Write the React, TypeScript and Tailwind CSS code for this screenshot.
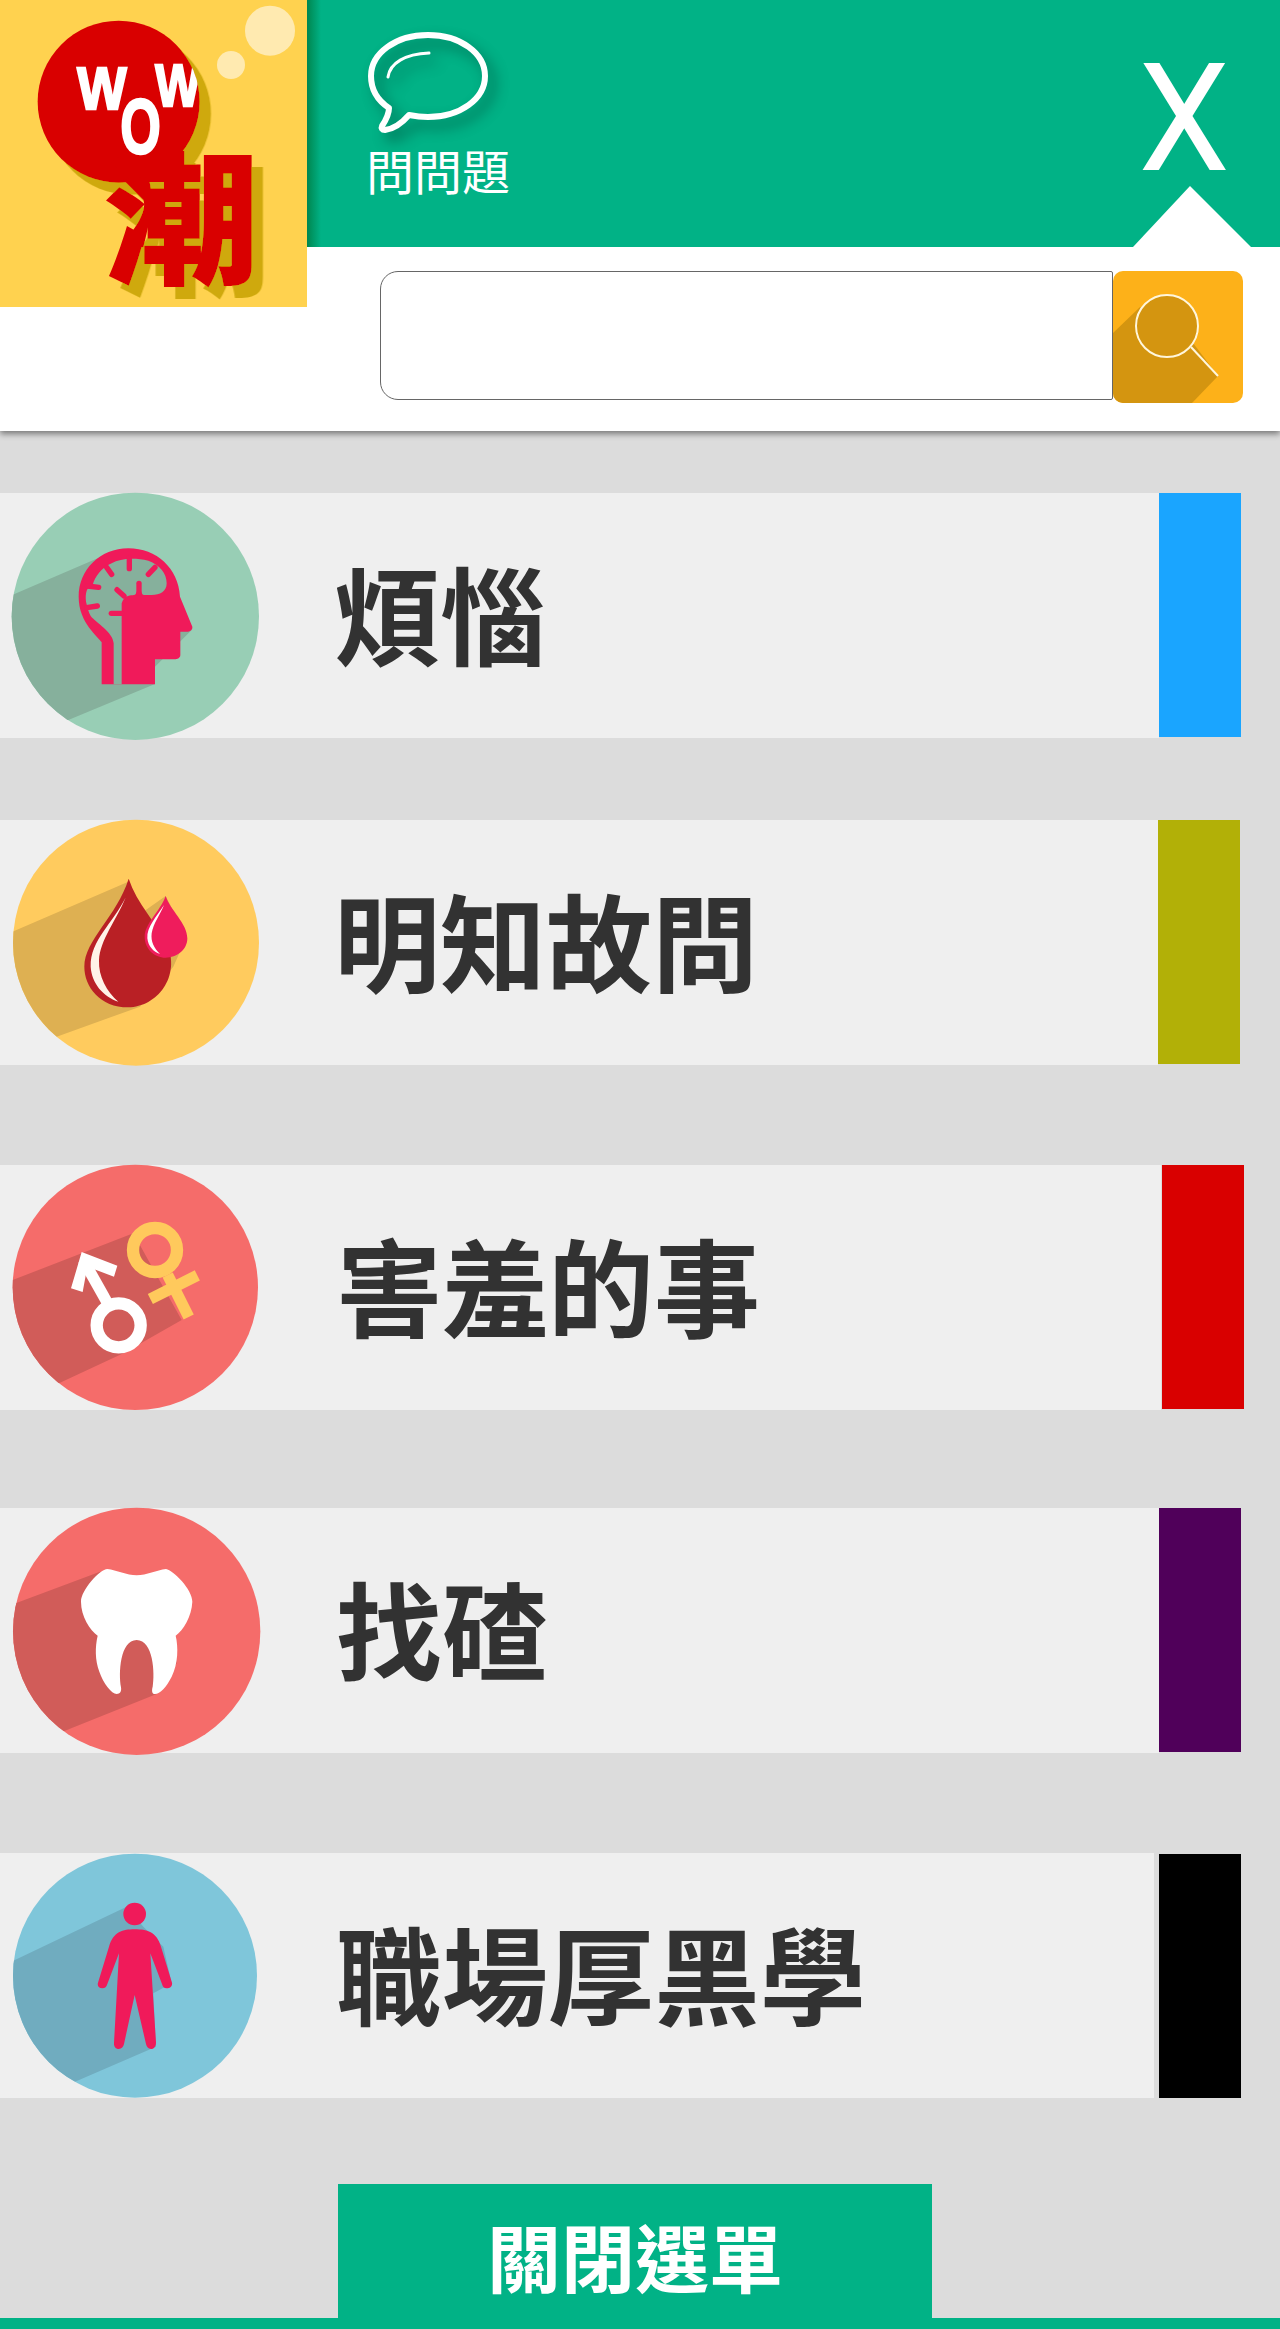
import React from "react";

const cjk = "'Noto Sans CJK TC','Noto Sans CJK SC',sans-serif";

function Logo() {
  return (
    <svg viewBox="0 0 921 921" width="307" height="307" className="absolute left-0 top-0">
      <defs>
        <clipPath id="ball"><circle cx="356" cy="305" r="243" /></clipPath>
        <filter id="cast" filterUnits="userSpaceOnUse" x="0" y="0" width="921" height="921">
          <feDropShadow dx="34" dy="36" stdDeviation="0" floodColor="#cfa90f" floodOpacity="1" />
        </filter>
      </defs>
      <rect width="921" height="921" fill="#ffd24f" />
      <circle cx="810" cy="92" r="75" fill="#ffeab0" />
      <circle cx="693" cy="195" r="42" fill="#ffeab0" />
      <g filter="url(#cast)">
        <circle cx="356" cy="305" r="243" fill="#d90000" />
        <path d="M370 540 L430 600 C440 625 420 670 365 735 L430 742 C450 660 465 600 445 530Z" fill="#d90000" />
        <text x="312" y="818" fontSize="430" fontWeight="900" fill="#d90000" fontFamily={cjk} textLength="466" lengthAdjust="spacingAndGlyphs">潮</text>
      </g>
      <g clipPath="url(#ball)" fontFamily="'Liberation Sans',sans-serif" fontWeight="700" fill="#fff" stroke="#fff" strokeWidth="7">
        <text x="232" y="326" fontSize="176" textLength="148" lengthAdjust="spacingAndGlyphs">W</text>
        <text x="466" y="319" fontSize="176" textLength="136" lengthAdjust="spacingAndGlyphs">W</text>
        <text x="361" y="460" fontSize="232" textLength="122" lengthAdjust="spacingAndGlyphs">O</text>
      </g>
    </svg>
  );
}

function Bubble() {
  return (
    <svg viewBox="0 0 130 105" width="130" height="105" className="block drop-shadow-[7px_8px_7px_rgba(0,0,0,0.38)]">
      <path
        d="M60 3 C92 3 117 21 117 44 C117 67 92 85 60 85 C52 85 46 84 41 83 C34 91 26 97 17 98 C14 98 13 96 14 94 C18 88 21 82 21 76 C9 68 3 57 3 44 C3 21 28 3 60 3Z"
        fill="none"
        stroke="#fff"
        strokeWidth="6"
        strokeLinejoin="round"
      />
      <path d="M20 45 C22 31 37 22 61 21" fill="none" stroke="#fff" strokeWidth="3" strokeLinecap="round" />
    </svg>
  );
}

function SearchGlyph() {
  return (
    <svg viewBox="0 0 130 132" width="130" height="132" className="block">
      <path d="M0 62 L27 36 L80 72 L105 105 L79 132 L0 132Z" fill="#d49510" />
      <circle cx="54" cy="55" r="31" fill="#d49510" stroke="#fff6dc" strokeWidth="2" />
      <line x1="78" y1="76" x2="105" y2="105" stroke="#fff6dc" strokeWidth="2" />
    </svg>
  );
}

function Disc({ id, cx, cy, r, color, shade, points, cls, children }: { id: string; cx: number; cy: number; r: number; color: string; shade: string; points: string; cls: string; children: React.ReactNode }) {
  return (
    <svg viewBox="0 0 840 840" width="280" height="280" className={"block flex-none overflow-visible " + cls}>
      <defs>
        <clipPath id={id}><circle cx={cx} cy={cy} r={r} /></clipPath>
      </defs>
      <circle cx={cx} cy={cy} r={r} fill={color} />
      <polygon points={points} fill={shade} clipPath={`url(#${id})`} />
      {children}
    </svg>
  );
}

function Brain() {
  const pink = "#f01a5a";
  const shade = "#86b09c";
  return (
    <Disc id="d1" cx={406} cy={409} r={371} color="#98ceb5" shade={shade} cls="-mt-[13px]" points="30,348 300,232 560,440 575,450 465,560 465,612 205,720 0,800 0,348">
      <path fill={pink} d="M305 613 L305 487 C296 470 236 430 236 350 C236 270 300 205 385 205 C470 205 535 265 540 350 L577 440 C578 450 570 455 560 455 L541 455 L541 525 C541 535 530 538 525 538 L465 538 L465 613Z" />
      <path fill={shade} d="M341 613 L341 490 C338 455 290 430 272 408 C265 395 262 380 258 365 C255 340 260 320 278 315 C285 290 305 262 335 250 C360 236 400 232 445 242 C480 255 500 280 500 310 C500 335 480 345 455 345 L432 345 C424 345 425 330 417 328 C409 330 410 345 402 345 C390 347 378 345 368 362 L365 370 L365 613Z" />
      <g stroke={pink} strokeWidth="16" strokeLinecap="round" fill="none">
        <line x1="388" y1="232" x2="388" y2="266" />
        <line x1="320" y1="262" x2="335" y2="283" />
        <line x1="465" y1="262" x2="445" y2="283" />
        <line x1="262" y1="318" x2="296" y2="322" />
        <line x1="260" y1="383" x2="292" y2="378" />
        <line x1="351" y1="329" x2="372" y2="348" />
        <line x1="417" y1="310" x2="417" y2="340" />
        <line x1="334" y1="400" x2="365" y2="400" />
      </g>
    </Disc>
  );
}

function Drops() {
  return (
    <Disc id="d2" cx={408} cy={398} r={369} color="#ffcb5e" shade="#deb052" cls="-mt-[10px]" points="38,365 385,215 430,305 497,258 560,380 520,470 420,590 170,680 0,700 0,365">
      <path fill="#b92025" d="M386 206 C410 280 470 340 500 400 C545 500 470 592 385 592 C300 592 253 530 253 470 C253 390 350 320 386 206Z" />
      <path fill="#fff3e8" d="M377 262 C340 340 270 390 272 470 C275 520 310 560 355 575 C320 545 295 500 297 450 C300 390 350 330 377 262Z" />
      <path fill="#ef1c5c" d="M497 258 C510 300 562 340 562 385 C562 420 530 443 497 443 C462 443 434 415 434 380 C434 340 480 305 497 258Z" />
      <path fill="#fff" d="M492 285 C470 320 440 350 442 385 C445 410 460 425 480 432 C462 415 452 395 455 370 C460 340 480 315 492 285Z" />
    </Disc>
  );
}

function Genders() {
  return (
    <Disc id="d3" cx={406} cy={412} r={368} color="#f56c6a" shade="#d15c59" cls="mt-[-15px]" points="38,390 400,250 545,510 370,610 180,698 0,760 0,390">
      <circle cx="356" cy="526" r="66" fill="none" stroke="#fff" strokeWidth="37" />
      <line x1="250" y1="330" x2="322" y2="458" stroke="#fff" strokeWidth="34" />
      <polygon points="245,306 352,347 342,380 262,350 248,426 213,415" fill="#fff" />
      <circle cx="465" cy="300" r="66" fill="none" stroke="#ffc95c" strokeWidth="37" />
      <line x1="503" y1="375" x2="566" y2="501" stroke="#ffc95c" strokeWidth="34" />
      <line x1="451" y1="447" x2="592" y2="376" stroke="#ffc95c" strokeWidth="34" />
    </Disc>
  );
}

function Tooth() {
  return (
    <Disc id="d4" cx={410} cy={424} r={371} color="#f56c6a" shade="#d15c59" cls="-mt-[18px]" points="47,340 300,245 520,430 530,520 470,612 195,722 0,800 0,340">
      <path fill="#fff" d="M322 237 C350 240 380 256 410 256 C440 256 470 240 498 237 C520 240 578 300 577 335 C575 380 550 420 527 437 C535 470 535 520 515 560 C500 590 480 612 465 612 C455 612 455 600 458 590 C465 550 460 450 410 450 C360 450 355 550 363 592 C365 605 360 612 350 612 C335 612 310 580 298 545 C285 510 285 470 293 437 C270 420 243 380 243 335 C243 300 300 237 322 237Z" />
    </Disc>
  );
}

function Person() {
  const pink = "#f01a5a";
  return (
    <Disc id="d5" cx={405} cy={407} r={366} color="#7fc6da" shade="#70acbf" cls="-mt-[13px]" points="40,362 380,200 430,260 490,320 515,430 460,460 468,620 225,725 0,800 0,362">
      <circle cx="404" cy="222" r="34" fill={pink} />
      <path fill={pink} d="M404 268 C440 268 470 275 483 320 L516 428 C518 440 510 445 500 445 C492 445 488 440 486 432 L451 340 L468 608 C468 620 460 627 453 627 C445 627 440 620 438 612 L404 465 L372 612 C370 620 365 627 356 627 C347 627 341 620 342 608 L357 340 L322 432 C320 440 315 445 307 445 C297 445 291 438 294 428 L327 320 C340 275 368 268 404 268Z" />
    </Disc>
  );
}

function Row({ top, width, barBox, label, labelBox, icon }: { top: string; width: string; barBox: string; label: string; labelBox: string; icon: React.ReactNode }) {
  return (
    <div className={"flex h-[245px] flex-none " + top}>
      <div className={"flex h-[245px] flex-none bg-[#efefef] " + width}>
        {icon}
        <div className={"flex h-[245px] items-center pb-[10px] text-[106px] leading-none font-bold whitespace-nowrap text-[#323232] " + labelBox}>{label}</div>
      </div>
      <div className={"w-[82px] flex-none " + barBox} />
    </div>
  );
}

export default function App() {
  return (
    <div className="flex h-[2329px] w-[1280px] flex-col overflow-hidden bg-[#dcdcdc] font-['Noto_Sans_CJK_TC','Noto_Sans_CJK_SC',sans-serif]">
      <div className="relative h-[431px] flex-none bg-white shadow-[0_3px_6px_rgba(0,0,0,0.45)]">
        <div className="relative flex h-[247px] bg-[#01b286] pl-[307px]">
          <div className="h-full w-[14px] flex-none bg-gradient-to-r from-[#00864f] to-[#01b286]" />
          <div className="ml-[47px] flex flex-col items-start pt-[32px]">
            <Bubble />
            <div className="-ml-[2px] mt-[2px] text-[48px] leading-[60px] font-normal whitespace-nowrap text-white">問問題</div>
          </div>
          <div className="ml-[632px] flex h-[238px] w-[84px] flex-none scale-x-[0.97] items-center justify-center font-['Roboto',sans-serif] text-[150px] leading-none font-normal text-white">X</div>
          <svg viewBox="0 0 118 61" width="118" height="61" className="absolute left-[1133px] top-[186px]">
            <polygon points="0,61 57,0 118,61" fill="#fff" />
          </svg>
        </div>
        <div className="flex pl-[380px] pt-[24px]">
          <div className="h-[129px] w-[733px] flex-none rounded-l-[18px] rounded-r-[2px] border border-[#666666] bg-white" />
          <div className="h-[132px] w-[130px] flex-none overflow-hidden rounded-[10px] bg-[#fdb119]">
            <SearchGlyph />
          </div>
        </div>
        <Logo />
      </div>

      <Row top="mt-[62px]" width="w-[1159px]" barBox="h-[244px] bg-[#1aa5ff]" label="煩惱" labelBox="ml-[54px]" icon={<Brain />} />
      <Row top="mt-[82px]" width="w-[1158px]" barBox="h-[244px] bg-[#b2b007]" label="明知故問" labelBox="ml-[54px]" icon={<Drops />} />
      <Row top="mt-[100px]" width="w-[1161px]" barBox="ml-[1px] h-[244px] bg-[#d90000]" label="害羞的事" labelBox="ml-[56px]" icon={<Genders />} />
      <Row top="mt-[98px]" width="w-[1159px]" barBox="h-[244px] bg-[#50005a]" label="找碴" labelBox="ml-[56px]" icon={<Tooth />} />
      <Row top="mt-[100px]" width="w-[1154px]" barBox="ml-[5px] mt-px h-[244px] bg-black" label="職場厚黑學" labelBox="ml-[56px]" icon={<Person />} />

      <div className="ml-[338px] mt-[86px] flex h-[134px] w-[594px] flex-none items-center justify-center bg-[#01b286] pt-[8px] text-[74px] leading-none font-bold text-white">關閉選單</div>
      <div className="h-[11px] flex-none bg-[#01b286]" />
    </div>
  );
}
